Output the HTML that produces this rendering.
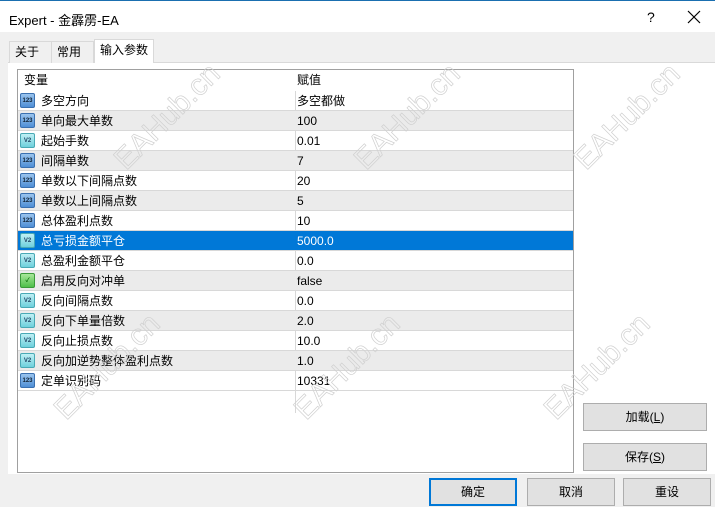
<!DOCTYPE html>
<html><head><meta charset="utf-8"><style>
*{margin:0;padding:0;box-sizing:border-box}
body{width:715px;height:507px;background:#f0f0f0;font-family:"Liberation Sans","Noto Sans CJK SC",sans-serif;font-size:12px;color:#000;position:relative;overflow:hidden}
.abs{position:absolute}
.title{left:0;top:0;width:715px;height:32px;background:#fff;border-top:1px solid #1a6fb0}
.tab{top:41px;height:22px;border:1px solid #d9d9d9;border-bottom:none;background:#f0f0f0;line-height:20px;padding-left:5px}
.panel{left:8px;top:62px;width:707px;height:412px;background:#fff;border-top:1px solid #d9d9d9}
.list{left:17px;top:69px;width:557px;height:404px;border:1px solid #a0a0a0;background:#fff}
.row{position:absolute;left:0;width:555px;height:20px;line-height:20px;border-bottom:1px solid #d8d8d8}
.row.g{background:#ebebeb}
.row.s{background:#0078d7;color:#fff}
.row .n{position:absolute;left:23px}
.row .v{position:absolute;left:279px}
.row .ic{position:absolute;left:2px;top:2px;width:15px;height:15px;border-radius:2px;font-size:6px;line-height:15px;text-align:center;font-weight:bold}
.i1{background:linear-gradient(#9ac4ee,#4f8fd6);color:#123;border:1px solid #3a70b0}
.i2{background:linear-gradient(#bff0f5,#6fd0dc);color:#246;border:1px solid #49a9b5}
.i3{background:linear-gradient(#a7e79a,#4fbf4a);color:#060;border:1px solid #3a9a3a}
.vl{position:absolute;left:277px;top:0;width:1px;height:322px;background:#d8d8d8}
.btn{position:absolute;height:28px;border:1px solid #adadad;background:#e1e1e1;text-align:center;line-height:26px}
.wm{position:absolute;color:transparent;-webkit-text-stroke:0.7px #d0d0d0;font-size:30px;transform:rotate(-45deg);font-family:"Liberation Sans",sans-serif;white-space:nowrap}
</style></head><body>
<div class="abs title"><span class="abs" style="left:9px;top:9px;font-size:13px">Expert - 金霹雳-EA</span>
<span class="abs" style="left:647px;top:8px;font-size:14px">?</span>
<svg class="abs" style="left:687px;top:9px" width="14" height="14"><path d="M1 1L13 13M13 1L1 13" stroke="#000" stroke-width="1.2"/></svg></div>
<div class="abs panel"></div>
<div class="abs tab" style="left:9px;width:43px">关于</div>
<div class="abs tab" style="left:51px;width:43px">常用</div>
<div class="abs tab" style="left:94px;top:39px;height:24px;width:60px;background:#fff;padding-left:5px">输入参数</div>
<div class="abs list">
<div class="row" style="top:0;height:21px;border:none"><span class="n" style="left:6px">变量</span><span class="v">赋值</span></div>
<div style="position:absolute;left:0;top:21px;width:555px;height:322px">
<div class="vl"></div>
<div class="row" style="top:0"><span class="ic i1">123</span><span class="n">多空方向</span><span class="v">多空都做</span></div>
<div class="row g" style="top:20px"><span class="ic i1">123</span><span class="n">单向最大单数</span><span class="v">100</span></div>
<div class="row" style="top:40px"><span class="ic i2">V2</span><span class="n">起始手数</span><span class="v">0.01</span></div>
<div class="row g" style="top:60px"><span class="ic i1">123</span><span class="n">间隔单数</span><span class="v">7</span></div>
<div class="row" style="top:80px"><span class="ic i1">123</span><span class="n">单数以下间隔点数</span><span class="v">20</span></div>
<div class="row g" style="top:100px"><span class="ic i1">123</span><span class="n">单数以上间隔点数</span><span class="v">5</span></div>
<div class="row" style="top:120px"><span class="ic i1">123</span><span class="n">总体盈利点数</span><span class="v">10</span></div>
<div class="row s" style="top:140px"><span class="ic i2">V2</span><span class="n">总亏损金额平仓</span><span class="v">5000.0</span></div>
<div class="row" style="top:160px"><span class="ic i2">V2</span><span class="n">总盈利金额平仓</span><span class="v">0.0</span></div>
<div class="row g" style="top:180px"><span class="ic i3">✓</span><span class="n">启用反向对冲单</span><span class="v">false</span></div>
<div class="row" style="top:200px"><span class="ic i2">V2</span><span class="n">反向间隔点数</span><span class="v">0.0</span></div>
<div class="row g" style="top:220px"><span class="ic i2">V2</span><span class="n">反向下单量倍数</span><span class="v">2.0</span></div>
<div class="row" style="top:240px"><span class="ic i2">V2</span><span class="n">反向止损点数</span><span class="v">10.0</span></div>
<div class="row g" style="top:260px"><span class="ic i2">V2</span><span class="n">反向加逆势整体盈利点数</span><span class="v">1.0</span></div>
<div class="row" style="top:280px"><span class="ic i1">123</span><span class="n">定单识别码</span><span class="v">10331</span></div>
</div></div>
<div class="wm" style="left:100px;top:100px">EAHub.cn</div>
<div class="wm" style="left:340px;top:100px">EAHub.cn</div>
<div class="wm" style="left:560px;top:100px">EAHub.cn</div>
<div class="wm" style="left:40px;top:350px">EAHub.cn</div>
<div class="wm" style="left:280px;top:350px">EAHub.cn</div>
<div class="wm" style="left:530px;top:350px">EAHub.cn</div>
<div class="btn" style="left:583px;top:403px;width:124px">加载(<u>L</u>)</div>
<div class="btn" style="left:583px;top:443px;width:124px">保存(<u>S</u>)</div>
<div class="btn" style="left:429px;top:478px;width:88px;border:1px solid #0078d7;box-shadow:inset 0 0 0 1px #0078d7">确定</div>
<div class="btn" style="left:527px;top:478px;width:88px">取消</div>
<div class="btn" style="left:623px;top:478px;width:88px">重设</div>
</body></html>
